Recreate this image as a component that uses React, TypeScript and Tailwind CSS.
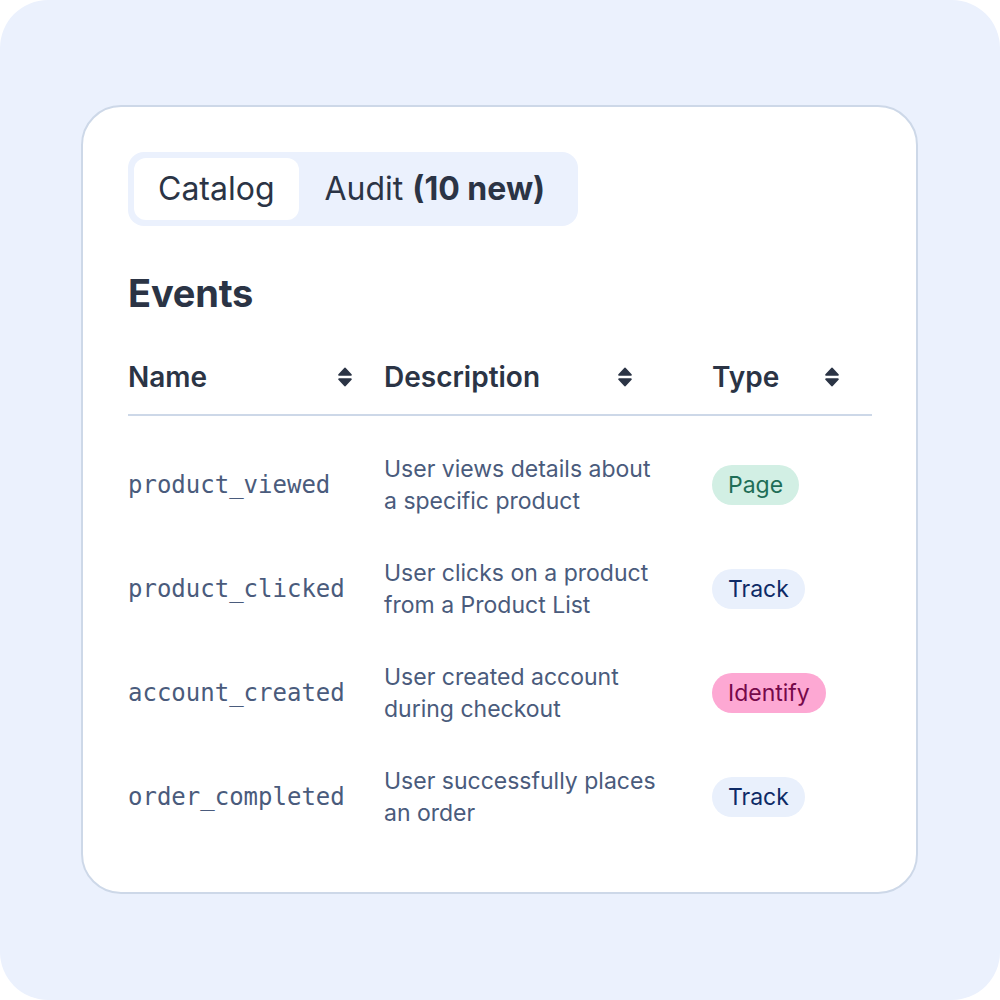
const ROWS = [
  {
    name: "product_viewed",
    desc: ["User views details about", "a specific product"],
    type: "Page",
  },
  {
    name: "product_clicked",
    desc: ["User clicks on a product", "from a Product List"],
    type: "Track",
  },
  {
    name: "account_created",
    desc: ["User created account", "during checkout"],
    type: "Identify",
  },
  {
    name: "order_completed",
    desc: ["User successfully places", "an order"],
    type: "Track",
  },
];

const BADGE: Record<string, string> = {
  Page: "bg-[#d2efe4] text-[#1f6e57]",
  Track: "bg-[#e9f0fc] text-[#0d2a66]",
  Identify: "bg-[#fda8d3] text-[#76094a]",
};

function SortIcon() {
  return (
    <svg width="16" height="20" viewBox="0 0 16 20" className="shrink-0">
      <path
        d="M7 1.2 a1.3 1.3 0 0 1 2 0 L14.6 7.2 A1 1 0 0 1 13.8 8.8 H2.2 A1 1 0 0 1 1.4 7.2 Z"
        fill="#2b3445"
      />
      <path
        d="M7 18.8 a1.3 1.3 0 0 0 2 0 L14.6 12.8 A1 1 0 0 0 13.8 11.2 H2.2 A1 1 0 0 0 1.4 12.8 Z"
        fill="#2b3445"
      />
    </svg>
  );
}

export default function App() {
  return (
    <div className="w-[1000px] h-[1000px] bg-white">
      <div
        className="w-full h-full rounded-[48px] bg-[#ebf1fd] pt-[105px] pl-[81px]"
        style={{ fontFamily: "Inter, 'Noto Sans', sans-serif" }}
      >
        <div className="w-[837px] h-[789px] rounded-[40px] border-2 border-[#cdd8e8] bg-white pt-[45px] pl-[45px]">
          {/* tabs */}
          <div className="flex w-[450px] h-[74px] p-[6px] rounded-[16px] bg-[#ebf1fd] text-[32px] text-[#2b3445]">
            <div className="flex items-center px-[24px] rounded-[12px] bg-white">
              Catalog
            </div>
            <div className="flex items-center pl-[26px]">
              Audit&nbsp;<span className="font-bold">(10 new)</span>
            </div>
          </div>

          <h1 className="mt-[48px] text-[38px] leading-[38px] font-bold text-[#2b3445] tracking-[-0.2px]">
            Events
          </h1>

          {/* table */}
          <div className="w-[744px] mt-[45px]">
            <div className="grid grid-cols-[256px_328px_160px] h-[59px] pb-[18px] border-b-2 border-[#cdd8e8] text-[28px] leading-[40px] font-semibold text-[#2b3445]">
              <div className="flex items-center justify-between pr-[31px]">
                Name
                <SortIcon />
              </div>
              <div className="flex items-center justify-between pr-[79px]">
                Description
                <SortIcon />
              </div>
              <div className="flex items-center justify-between pr-[32px]">
                Type
                <SortIcon />
              </div>
            </div>

            <div className="pt-[17px]">
              {ROWS.map((r) => (
                <div
                  key={r.name}
                  className="grid grid-cols-[256px_328px_160px] h-[104px] items-center"
                >
                  <div
                    className="text-[24px] text-[#4a5b7c]"
                    style={{
                      fontFamily: "'DejaVu Sans Mono', 'Liberation Mono', monospace",
                    }}
                  >
                    {r.name}
                  </div>
                  <div className="text-[23px] leading-[32px] text-[#4a5b7c]">
                    {r.desc[0]}
                    <br />
                    {r.desc[1]}
                  </div>
                  <div>
                    <span
                      className={`inline-flex items-center h-[40px] px-4 rounded-full text-[23px] ${BADGE[r.type]}`}
                    >
                      {r.type}
                    </span>
                  </div>
                </div>
              ))}
            </div>
          </div>
        </div>
      </div>
    </div>
  );
}
